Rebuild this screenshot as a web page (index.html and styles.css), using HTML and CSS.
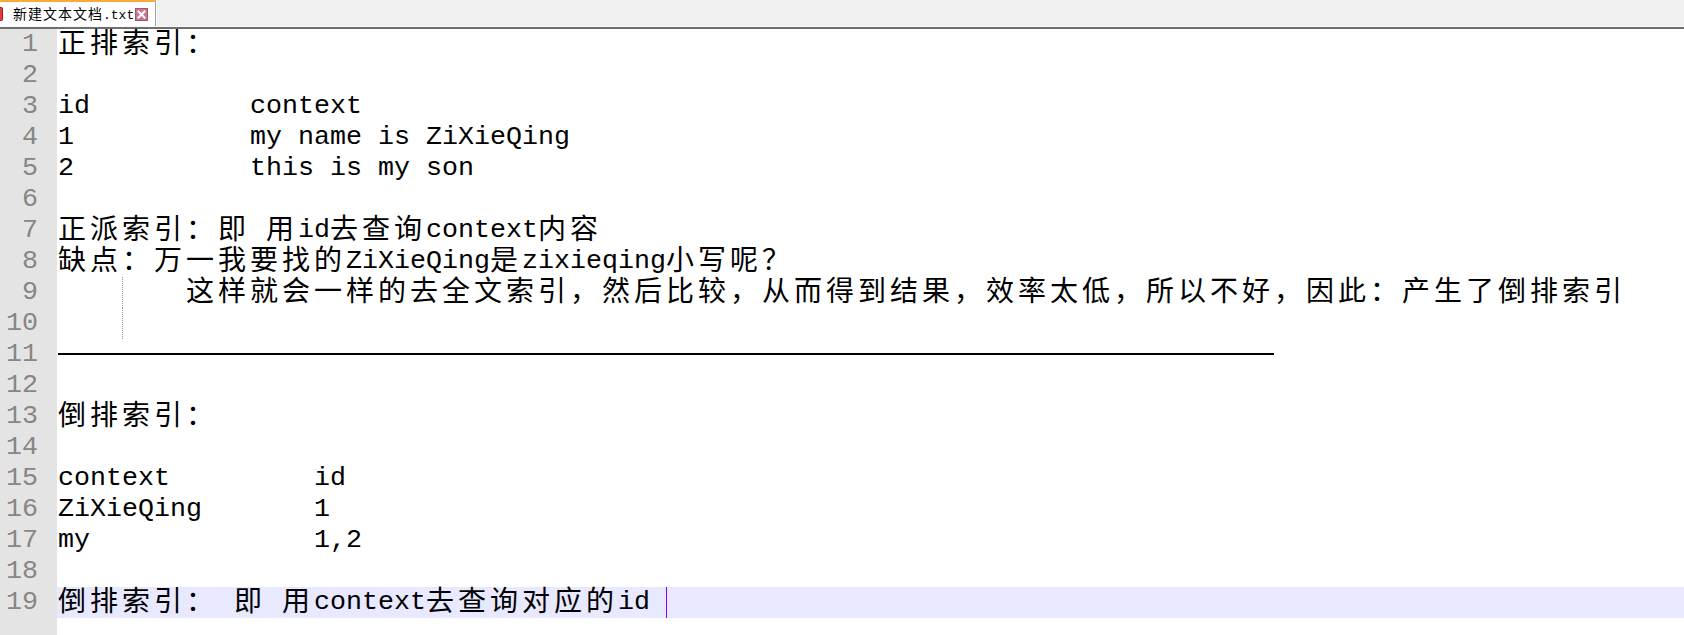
FILE: index.html
```html
<!DOCTYPE html>
<html lang="zh-CN">
<head>
<meta charset="utf-8">
<title>新建文本文档.txt - Notepad++</title>
<link rel="stylesheet" href="styles.css">
</head>
<body>
<div class="app">
  <div class="tabbar">
    <div class="doc-tab">
      <svg class="ficon" width="16" height="16" viewBox="0 0 16 16" aria-hidden="true">
        <rect x="1.5" y="1.5" width="13" height="13" rx="1" fill="#e43b3b" stroke="#a81818"/>
        <rect x="4" y="3" width="8" height="5" fill="#ffffff"/>
        <rect x="4" y="10" width="8" height="4" fill="#f3c0c0"/>
      </svg>
      <span class="tname"><span class="tcj">新建文本文档</span>.txt</span>
      <span class="tclose">
        <svg width="13" height="13" viewBox="0 0 13 13" aria-hidden="true">
          <rect x="0.5" y="0.5" width="12" height="12" fill="#c8768b" stroke="#a5566b"/>
          <path d="M3.5 3.5 L9.5 9.5 M9.5 3.5 L3.5 9.5" stroke="#ffffff" stroke-width="2" stroke-linecap="square"/>
        </svg>
      </span>
    </div>
  </div>
  <div class="editor">
    <div class="gutter">
      <div class="ln">1</div>
      <div class="ln">2</div>
      <div class="ln">3</div>
      <div class="ln">4</div>
      <div class="ln">5</div>
      <div class="ln">6</div>
      <div class="ln">7</div>
      <div class="ln">8</div>
      <div class="ln">9</div>
      <div class="ln">10</div>
      <div class="ln">11</div>
      <div class="ln">12</div>
      <div class="ln">13</div>
      <div class="ln">14</div>
      <div class="ln">15</div>
      <div class="ln">16</div>
      <div class="ln">17</div>
      <div class="ln">18</div>
      <div class="ln">19</div>
    </div>
    <div class="text">
      <div class="line"><span class="c">正排索引：</span></div>
      <div class="line"></div>
      <div class="line">id          context</div>
      <div class="line">1           my name is ZiXieQing</div>
      <div class="line">2           this is my son</div>
      <div class="line"></div>
      <div class="line"><span class="c">正派索引：即</span> <span class="c">用</span>id<span class="c">去查询</span>context<span class="c">内容</span></div>
      <div class="line"><span class="c">缺点：万一我要找的</span>ZiXieQing<span class="c">是</span>zixieqing<span class="c">小写呢？</span></div>
      <div class="line"><span class="ws"></span><span class="ws guide"></span><span class="c">这样就会一样的去全文索引，然后比较，从而得到结果，效率太低，所以不好，因此：产生了倒排索引</span></div>
      <div class="line"><span class="ws"></span><span class="ws guide"></span></div>
      <div class="line"><span class="rule">——————————————————————————————————————</span></div>
      <div class="line"></div>
      <div class="line"><span class="c">倒排索引：</span></div>
      <div class="line"></div>
      <div class="line">context         id</div>
      <div class="line">ZiXieQing       1</div>
      <div class="line">my              1,2</div>
      <div class="line"></div>
      <div class="line current"><span class="c">倒排索引：</span> <span class="c">即</span> <span class="c">用</span>context<span class="c">去查询对应的</span>id <span class="caret"></span></div>
    </div>
  </div>
</div>
</body>
</html>
```

FILE: styles.css
```css
html, body {
  margin: 0;
  padding: 0;
  background: #ffffff;
}

body {
  width: 1684px;
  height: 635px;
  overflow: hidden;
}

.app {
  display: flex;
  flex-direction: column;
  height: 635px;
}

.tabbar {
  flex: none;
  display: flex;
  height: 26px;
  background: #f0f0f0;
  border-bottom: 1px solid #fbfbfb;
}

.doc-tab {
  box-sizing: border-box;
  width: 156px;
  height: 26px;
  display: flex;
  align-items: center;
  background: #ffffff;
  border-top: 2px solid #faaa3c;
  border-right: 1px solid #a0a0a0;
  box-shadow: 1px 0 0 #ffffff;
  overflow: hidden;
}

.ficon {
  flex: none;
  margin-left: -12px;
  margin-right: 9px;
}

.tname {
  font-family: "Liberation Mono", "Noto Sans CJK SC", monospace;
  font-size: 13px;
  color: #000000;
  white-space: pre;
  line-height: 20px;
}

.tcj {
  font-family: "Noto Sans CJK SC", sans-serif;
  font-size: 14px;
  letter-spacing: 1px;
}

.tclose {
  display: flex;
  margin-left: 1px;
}

.editor {
  flex: 1;
  display: flex;
  border-top: 2px solid #6e6e6e;
  min-height: 0;
}

.gutter {
  flex: none;
  width: 57px;
  background: #e4e4e4;
}

.ln {
  height: 31px;
  line-height: 31px;
  box-sizing: border-box;
  padding-right: 19px;
  text-align: right;
  color: #868686;
  font-family: "Liberation Mono", monospace;
  font-size: 26.667px;
}

.text {
  flex: 1;
  background: #ffffff;
  font-family: "Liberation Mono", "Noto Sans CJK SC", monospace;
  font-size: 26.667px;
  color: #000000;
}

.line {
  height: 31px;
  line-height: 31px;
  padding-left: 1px;
  white-space: pre;
}

.current {
  background: #e8e8ff;
}

.c {
  font-family: "Noto Sans CJK SC", sans-serif;
  font-size: 28px;
  letter-spacing: 4px;
  line-height: 20px;
  vertical-align: -2px;
}

.ws {
  display: inline-block;
  width: 64px;
  height: 31px;
  vertical-align: top;
}

.ws.guide {
  box-sizing: border-box;
  border-left: 1px dotted #9a9a9a;
}

.rule {
  display: inline-block;
  width: 1216px;
  height: 31px;
  vertical-align: top;
  font-family: "Noto Sans CJK SC", sans-serif;
  font-size: 26px;
  line-height: 31px;
  letter-spacing: 0;
  color: transparent;
  background: linear-gradient(#000000, #000000) 0 14px / 100% 2px no-repeat;
}

.caret {
  display: inline-block;
  width: 1px;
  height: 31px;
  vertical-align: top;
  background: #8000ff;
}
```
